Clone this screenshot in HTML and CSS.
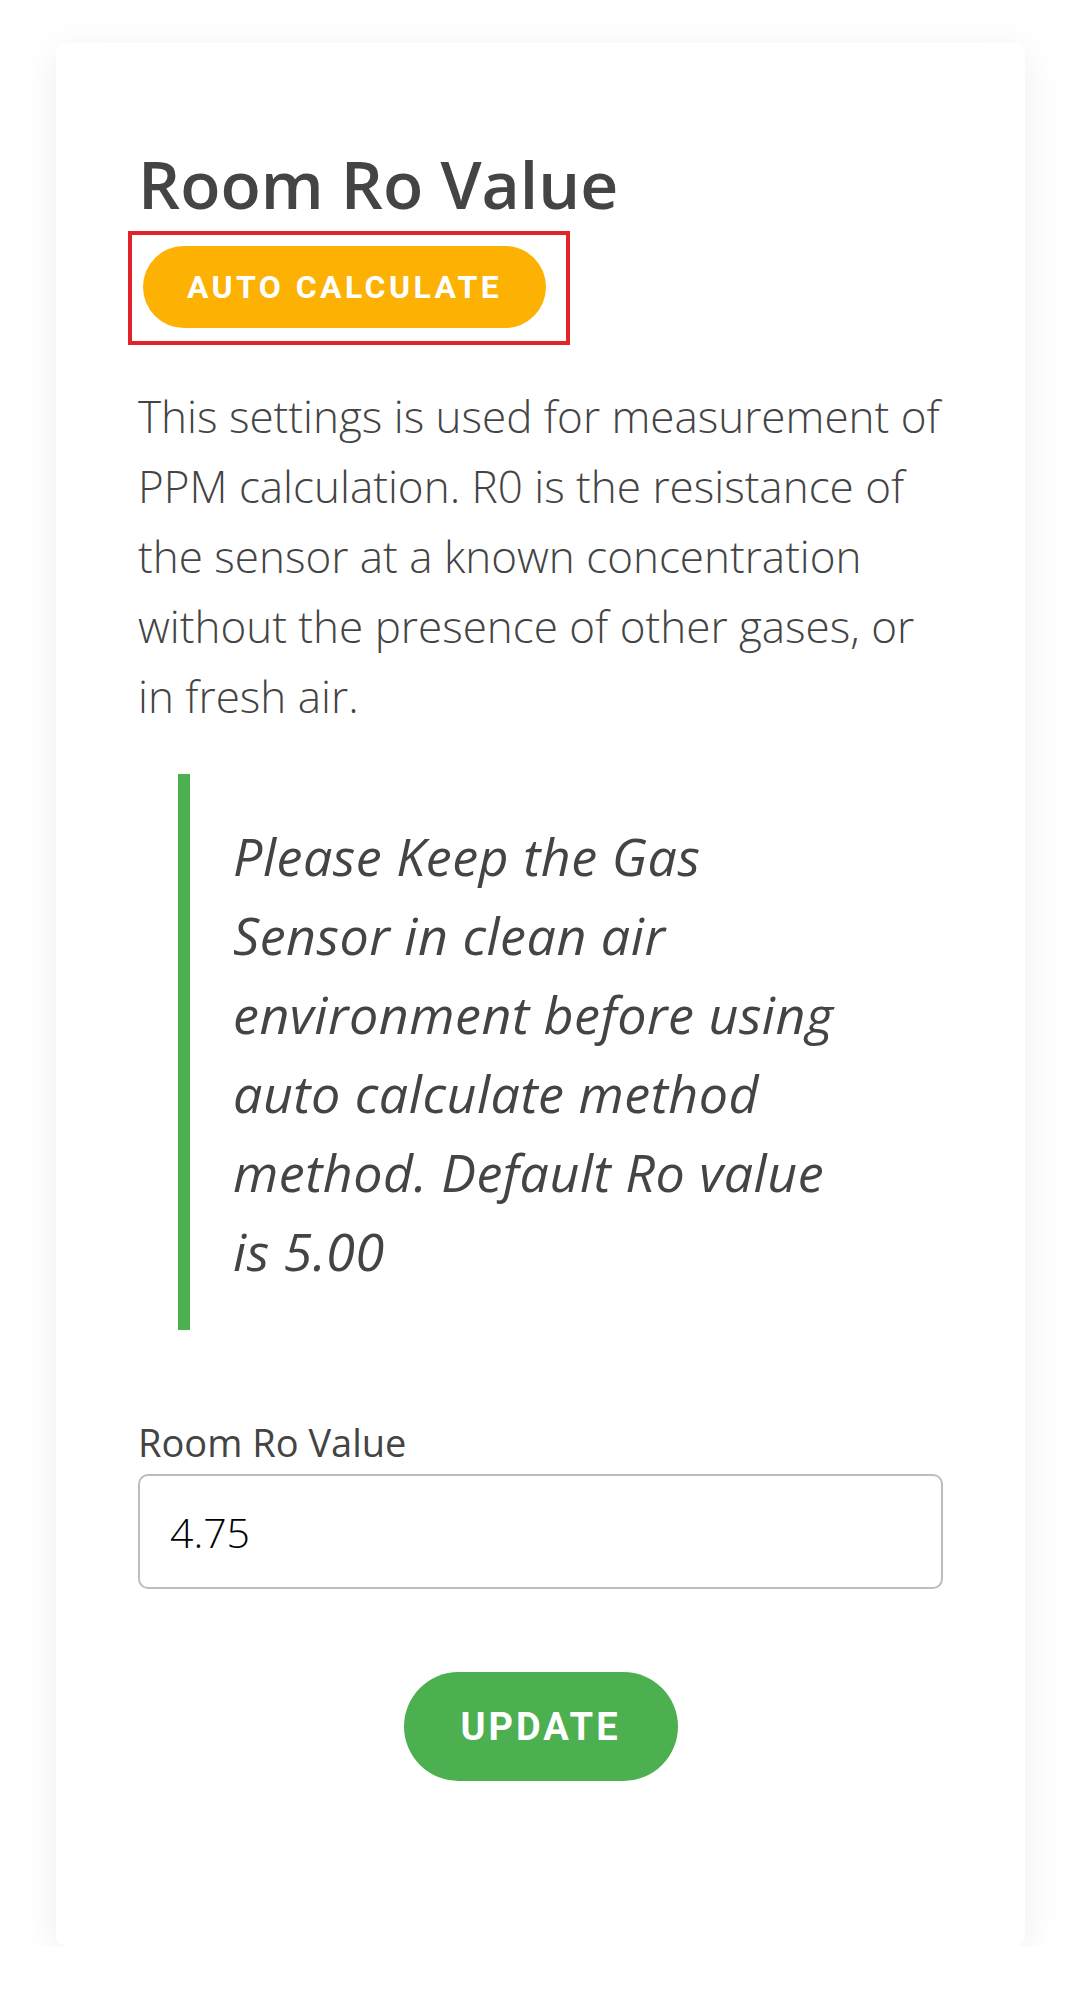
FILE: index.html
```html
<!DOCTYPE html>
<html lang="en">
<head>
<meta charset="utf-8">
<title>Room Ro Value</title>
<link rel="stylesheet" href="styles.css">
</head>
<body>
<div class="card">
  <h2 class="title">Room Ro Value</h2>
  <div class="action-row">
    <div class="highlight-wrap">
      <button class="btn btn-auto" type="button">AUTO CALCULATE</button>
      <span class="highlight"></span>
    </div>
  </div>
  <p class="desc">This settings is used for measurement of PPM calculation. R0 is the resistance of the sensor at a known concentration without the presence of other gases, or in fresh air.</p>
  <blockquote class="note">
    <p>Please Keep the Gas<br>Sensor in clean air<br>environment before using<br>auto calculate method<br>method. Default Ro value<br>is 5.00</p>
  </blockquote>
  <form class="form">
    <label class="label" for="ro">Room Ro Value</label>
    <input class="input" id="ro" type="text" value="4.75">
    <div class="submit-row">
      <button class="btn btn-update" type="button">UPDATE</button>
    </div>
  </form>
</div>
</body>
</html>
```

FILE: styles.css
```css
html, body {
  margin: 0;
  padding: 0;
  background: #ffffff;
}

body {
  font-family: "Open Sans", "Noto Sans", sans-serif;
  color: #444444;
}

.card {
  margin: 43px 55px 0 56px;
  padding: 100px 82px 165px 82px;
  background: #ffffff;
  border-radius: 10px;
  box-shadow: 0 8px 40px rgba(0, 0, 0, 0.07);
}

.title {
  margin: 0;
  font-size: 66px;
  line-height: 80px;
  font-weight: 600;
  color: #444444;
}

.action-row {
  display: flex;
  margin-top: 23px;
  margin-bottom: 53px;
  padding-left: 5px;
}

.highlight-wrap {
  position: relative;
  display: flex;
}

.highlight {
  position: absolute;
  left: -15px;
  top: -15px;
  right: -24px;
  bottom: -17px;
  border: 4px solid #e2232c;
  pointer-events: none;
}

.btn {
  border: none;
  border-radius: 999px;
  color: #ffffff;
  font-family: "Roboto", "Noto Sans", sans-serif;
  font-weight: 700;
  cursor: pointer;
  padding: 0;
}

.btn-auto {
  width: 403px;
  height: 82px;
  background: #fdb103;
  font-size: 32px;
  letter-spacing: 3.4px;
}

.desc {
  margin: 0;
  font-size: 44px;
  line-height: 70px;
  font-weight: 300;
  color: #444444;
}

.note {
  margin: 43px 40px 0 40px;
  padding: 42px 10px 40px 43px;
  border-left: 12px solid #4caf50;
}

.note p {
  margin: 0;
  font-size: 52px;
  line-height: 79px;
  letter-spacing: 0.5px;
  font-style: italic;
  font-weight: 400;
  color: #444444;
  white-space: nowrap;
}

.form {
  margin-top: 86px;
  display: flex;
  flex-direction: column;
}

.label {
  font-size: 38px;
  line-height: 52px;
  font-weight: 400;
  color: #444444;
}

.input {
  margin-top: 6px;
  box-sizing: border-box;
  width: 100%;
  height: 115px;
  padding: 0 30px;
  border: 2px solid #bdbdbd;
  border-radius: 10px;
  font-family: "Open Sans", "Noto Sans", sans-serif;
  font-size: 41px;
  font-weight: 300;
  color: #000000;
  background: #ffffff;
  outline: none;
}

.submit-row {
  display: flex;
  justify-content: center;
  margin-top: 83px;
}

.btn-update {
  width: 274px;
  height: 109px;
  background: #4caf50;
  font-size: 38px;
  letter-spacing: 3px;
}
```
